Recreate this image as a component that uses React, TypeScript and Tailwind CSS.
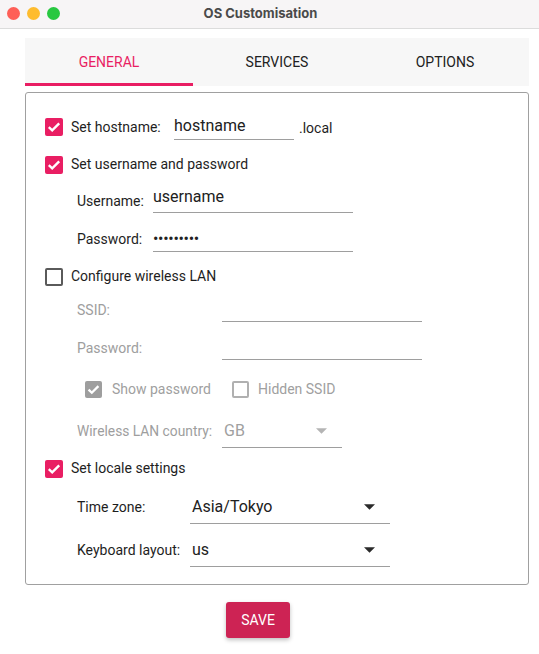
import { clsx } from 'clsx'
import { ReactNode } from 'react'

const font = { fontFamily: 'Roboto, "Noto Sans", sans-serif' }

// --- Checkbox ---
function Check({ checked, disabled, small }: { checked?: boolean; disabled?: boolean; small?: boolean }) {
  const size = small ? 'w-[17px] h-[17px]' : 'w-[18px] h-[18px]'
  if (checked) {
    return (
      <span className={clsx('inline-flex shrink-0 items-center justify-center rounded-[2px]', size, disabled ? 'bg-[#9e9e9e]' : 'bg-[#e91e63]')}>
        <svg viewBox="0 0 18 18" className="w-full h-full">
          <path d="M3.8 9.2l3.4 3.2L14.2 5.4" fill="none" stroke="white" strokeWidth="2.4" />
        </svg>
      </span>
    )
  }
  return (
    <span className={clsx('inline-block shrink-0 rounded-[2px] border-2', size, disabled ? 'border-[#b0b0b0]' : 'border-[#5a5a5a]')} />
  )
}

function Arrow({ disabled }: { disabled?: boolean }) {
  return (
    <svg viewBox="0 0 10 5" className="w-[11px] h-[6px]">
      <path d="M0 0h10L5 5z" fill={disabled ? '#b4b4b4' : '#2a2a2a'} />
    </svg>
  )
}

function Row({ h, children, className }: { h: string; children: ReactNode; className?: string }) {
  return <div className={clsx('flex items-center', h, className)}>{children}</div>
}

function Field({ w, h, value, disabled, className }: { w: string; h: string; value?: string; disabled?: boolean; className?: string }) {
  return (
    <div className={clsx('flex items-center border-b border-[#9e9e9e] text-[16px]', w, h, disabled ? 'text-[#a0a0a0]' : 'text-[#212121]', className)}>
      {value}
    </div>
  )
}

function Combo({ w, value, disabled }: { w: string; value: string; disabled?: boolean }) {
  return (
    <div className={clsx('flex items-center justify-between h-[34px] border-b border-[#9e9e9e] pl-[2px] pr-[15px] text-[16px]', w, disabled ? 'text-[#a0a0a0]' : 'text-[#212121]')}>
      <span>{value}</span>
      <Arrow disabled={disabled} />
    </div>
  )
}

export default function App() {
  return (
    <div className="w-[539px] h-[654px] bg-white overflow-hidden" style={font}>
      {/* title bar */}
      <div className="relative flex items-center justify-center h-[29px] bg-[#f7f5f6] border-b border-[#dcdcdc]">
        <div className="absolute left-[7px] top-[7px] flex gap-[7px]">
          <span className="block shrink-0 w-[13px] h-[13px] rounded-full bg-[#fe5f57]" />
          <span className="block shrink-0 w-[13px] h-[13px] rounded-full bg-[#febc2e]" />
          <span className="block shrink-0 w-[13px] h-[13px] rounded-full bg-[#28c840]" />
        </div>
        <span className="pr-[18px] text-[13px] font-bold text-[#4a4a4a]" style={{ fontFamily: 'Inter, "Liberation Sans", sans-serif' }}>
          OS Customisation
        </span>
      </div>

      <div className="ml-[25px] w-[504px]">
        {/* tabs */}
        <div className="mt-[9px] flex h-[48px] bg-[#f7f7f7] text-[14px]">
          <div className="flex-1 flex items-center justify-center text-[#e91e63] border-b-[3px] border-[#e91e63] pt-[3px]">GENERAL</div>
          <div className="flex-1 flex items-center justify-center text-[#212121]">SERVICES</div>
          <div className="flex-1 flex items-center justify-center text-[#212121]">OPTIONS</div>
        </div>

        {/* panel */}
        <div className="mt-[6px] border border-[#a0a0a0] rounded-[3px] py-[15px] pl-[19px] text-[14px] text-[#1e1e1e]">
          <Row h="h-[38px]">
            <Check checked />
            <span className="ml-[8px] w-[103px]">Set hostname:</span>
            <Field w="w-[120px]" h="h-[26px]" value="hostname" className="items-start" />
            <span className="ml-[5px] mt-[2px]">.local</span>
          </Row>
          <Row h="h-[37px]">
            <Check checked />
            <span className="ml-[8px]">Set username and password</span>
          </Row>
          <Row h="h-[36px]" className="pl-[32px]">
            <span className="w-[76px]">Username:</span>
            <Field w="w-[200px]" h="h-[28px]" value="username" className="items-start -mt-[4px]" />
          </Row>
          <Row h="h-[40px]" className="pl-[32px]">
            <span className="w-[76px]">Password:</span>
            <Field w="w-[200px]" h="h-[26px]" value="•••••••••" className="text-[14px] tracking-[-0.3px]" />
          </Row>
          <Row h="h-[35px]">
            <Check />
            <span className="ml-[8px]">Configure wireless LAN</span>
          </Row>
          <Row h="h-[32px]" className="pl-[32px] text-[#9e9e9e]">
            <span className="w-[145px]">SSID:</span>
            <Field w="w-[200px]" h="h-[24px]" disabled />
          </Row>
          <Row h="h-[44px]" className="pl-[32px] text-[#9e9e9e]">
            <span className="w-[145px]">Password:</span>
            <Field w="w-[200px]" h="h-[24px]" disabled />
          </Row>
          <Row h="h-[38px]" className="pl-[40px] text-[#a0a0a0]">
            <Check checked disabled small />
            <span className="ml-[10px] w-[120px]">Show password</span>
            <Check disabled small />
            <span className="ml-[9px]">Hidden SSID</span>
          </Row>
          <Row h="h-[46px]" className="pl-[32px] text-[#9e9e9e]">
            <span className="w-[145px] text-[13.8px]">Wireless LAN country:</span>
            <Combo w="w-[120px]" value="GB" disabled />
          </Row>
          <Row h="h-[29px]">
            <Check checked />
            <span className="ml-[8px]">Set locale settings</span>
          </Row>
          <Row h="h-[48px]" className="pl-[32px]">
            <span className="w-[113px]">Time zone:</span>
            <Combo w="w-[200px]" value="Asia/Tokyo" />
          </Row>
          <Row h="h-[38px]" className="pl-[32px]">
            <span className="w-[113px]">Keyboard layout:</span>
            <Combo w="w-[200px]" value="us" />
          </Row>
        </div>

        {/* save */}
        <div className="mt-[17px] flex justify-center pr-[38px]">
          <button className="w-[64px] h-[36px] rounded-[3px] bg-[#cd2354] text-white text-[14px] shadow-[0_2px_4px_rgba(0,0,0,0.25)]">
            SAVE
          </button>
        </div>
      </div>
    </div>
  )
}
